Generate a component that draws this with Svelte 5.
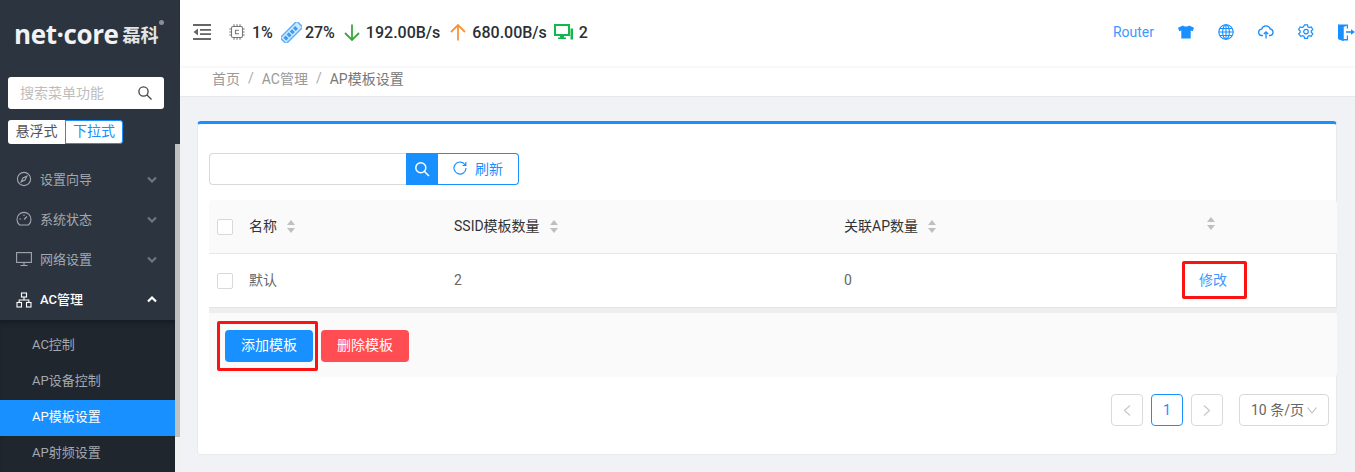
<script>
	const menu = [
		{ name: '设置向导', icon: 'compass' },
		{ name: '系统状态', icon: 'gauge' },
		{ name: '网络设置', icon: 'monitor' }
	];
	const subs = ['AC控制', 'AP设备控制', 'AP模板设置', 'AP射频设置'];
</script>

<div class="page">
	<aside class="sidebar">
		<div class="logo">
			<span class="logo-en">net·core</span><span class="logo-cn">磊科</span><span class="logo-r"></span>
		</div>
		<div class="search">
			<span>搜索菜单功能</span>
			<svg width="16" height="16" viewBox="0 0 16 16" fill="none" stroke="#444" stroke-width="1.3"><circle cx="6.5" cy="6.5" r="4.6" /><path d="M10 10l4.5 4.5" /></svg>
		</div>
		<div class="mode">
			<span class="mode-a">悬浮式</span><span class="mode-b">下拉式</span>
		</div>
		<div class="nav-wrap">
			<nav class="nav">
				{#each menu as item}
					<div class="item">
						<svg class="item-icon" width="16" height="16" viewBox="0 0 16 16" fill="none" stroke="#a3a8ae" stroke-width="1.1">
							{#if item.icon === 'compass'}
								<circle cx="8" cy="8" r="6.6" /><path d="M10.8 5.2L9 9 5.2 10.8 7 7z" />
							{:else if item.icon === 'gauge'}
								<path d="M3.6 14h8.8c1.6-1.2 2.6-3.3 2.6-5.6A7 7 0 0 0 1 8.400c0 2.300 1 4.400 2.600 5.600z" /><path d="M8 8.500L11 5.500M3.500 8h1.500M8 3.500V5" />
							{:else}
								<rect x="0.600" y="1.600" width="14.800" height="9.800" /><path d="M8 11.500v3M4.500 14.500h7" />
							{/if}
						</svg>
						<span>{item.name}</span>
						<svg class="chev" width="10" height="7" viewBox="0 0 10 7" fill="none" stroke="#6f757c" stroke-width="2.200"><path d="M1 1.500l4 4 4-4" /></svg>
					</div>
				{/each}
				<div class="item open">
					<svg class="item-icon" width="16" height="16" viewBox="0 0 16 16" fill="none" stroke="#fff" stroke-width="1.100"><rect x="5.500" y="1" width="5" height="4" /><rect x="1" y="10.500" width="4.500" height="4.500" /><rect x="10.500" y="10.500" width="4.500" height="4.500" /><path d="M8 5v3M3.200 10.500V8h9.600v2.500" /></svg>
					<span>AC管理</span>
					<svg class="chev" width="10" height="7" viewBox="0 0 10 7" fill="none" stroke="#fff" stroke-width="2.200"><path d="M1 5.500l4-4 4 4" /></svg>
				</div>
				<div class="subs">
					{#each subs as sub, i}
						<div class="sub" class:active={i === 2}>{sub}</div>
					{/each}
				</div>
			</nav>
			<div class="scrollbar"><div class="thumb"></div></div>
		</div>
	</aside>

	<main class="main">
		<header class="topbar">
			<svg class="fold" width="18" height="16" viewBox="0 0 18 16" fill="#666"><rect y="0" width="18" height="2" /><rect x="7" y="5" width="11" height="1.800" /><rect x="7" y="9.200" width="11" height="1.800" /><rect y="14" width="18" height="2" /><path d="M5 4.500v7L0.500 8z" /></svg>
			<svg class="ico-cpu" width="16" height="16" viewBox="0 0 16 16" fill="none" stroke="#777" stroke-width="1.100"><rect x="2.500" y="2.500" width="11" height="11" rx="1.500" /><path d="M5 0.300v2M8 0.300v2M11 0.300v2M5 13.500v2.200M8 13.500v2.200M11 13.500v2.200M0.300 5h2M0.300 8h2M0.300 11h2M13.500 5h2.200M13.500 8h2.200M13.500 11h2.200M10 6.200H6.500v3.600H10" /></svg>
			<b class="stat s-cpu">1%</b>
			<svg class="ico-ram" width="21" height="21" viewBox="0 0 21 21"><g transform="rotate(-45 10.500 10.500)"><rect x="-2" y="5.500" width="25" height="10" fill="#5fb0f7" /><rect x="-0.500" y="7" width="22" height="7" fill="#cfe7fd" /><rect x="1" y="8.500" width="3.200" height="4" fill="#3d9cf2" /><rect x="5.500" y="8.500" width="3.200" height="4" fill="#3d9cf2" /><rect x="10" y="8.500" width="3.200" height="4" fill="#3d9cf2" /><rect x="14.500" y="8.500" width="3.200" height="4" fill="#3d9cf2" /></g></svg>
			<b class="stat s-ram">27%</b>
			<svg class="ico-down" width="16" height="17" viewBox="0 0 16 17" fill="none" stroke="#3aa63f" stroke-width="1.800"><path d="M8 0.500V16M1 9l7 7 7-7" /></svg>
			<b class="stat s-down">192.00B/s</b>
			<svg class="ico-up" width="16" height="17" viewBox="0 0 16 17" fill="none" stroke="#f7953b" stroke-width="1.800"><path d="M8 16.500V1M1 8l7-7 7 7" /></svg>
			<b class="stat s-up">680.00B/s</b>
			<svg class="ico-pc" width="19" height="16" viewBox="0 0 19 16"><rect x="1" y="1" width="14" height="10" fill="none" stroke="#12b84c" stroke-width="2" /><rect x="16.500" y="4.500" width="2.500" height="11" fill="#12b84c" /><path d="M6 12h4v1.500h2V15H4v-1.500h2z" fill="#12b84c" /></svg>
			<b class="stat s-pc">2</b>

			<div class="tools">
				<span class="router">Router</span>
				<svg width="16" height="14" viewBox="0 0 16 14" fill="#1890ff"><path d="M5 0.500C6 1.800 10 1.800 11 0.500l5 2.300-1.300 3.400-2-.6V13.500H3.300V5.600l-2 .6L0 2.800z" /></svg>
				<svg width="16" height="16" viewBox="0 0 16 16" fill="none" stroke="#1890ff" stroke-width="1.100"><circle cx="8" cy="8" r="7.200" /><ellipse cx="8" cy="8" rx="3.400" ry="7.200" /><path d="M8 0.800v14.400M0.800 8h14.400M1.800 4.500h12.400M1.800 11.500h12.400" /></svg>
				<svg width="16" height="14" viewBox="0 0 16 14" fill="none" stroke="#1890ff" stroke-width="1.300"><path d="M5 10.500H4a3.200 3.200 0 0 1-.3-6.400A4.500 4.500 0 0 1 12.300 4a3.300 3.300 0 0 1 0 6.500H11" /><path d="M8 13.500V7M5.800 9L8 6.800 10.200 9" /></svg>
				<svg width="16" height="16" viewBox="0 0 16 16" fill="none" stroke="#1890ff" stroke-width="1.200"><path d="M6.500 0.800h3l.4 2 1.400.8 2-.7 1.500 2.600-1.500 1.300v1.600l1.500 1.300-1.500 2.600-2-.7-1.400.8-.4 2h-3l-.4-2-1.400-.8-2 .7L.6 9.700l1.500-1.300V6.800L.6 5.500l1.500-2.600 2 .7 1.400-.8z" /><circle cx="8" cy="7.600" r="2.300" /></svg>
				<svg width="17" height="17" viewBox="0 0 17 17"><path d="M0 0.500h10v4H8.800V1.800L5.500 3v12h3.300v-3.500H10V16.500H5.500v.5L0 15z" fill="#1890ff" /><path d="M0 0.500L5.500 3v14L0 15z" fill="#1890ff" /><path d="M8 8h6" stroke="#1890ff" stroke-width="1.600" /><path d="M13 5.200L17 8l-4 2.800z" fill="#1890ff" /></svg>
			</div>
		</header>

		<div class="crumbs">
			<span>首页</span><i>/</i><span>AC管理</span><i>/</i><span class="now">AP模板设置</span>
		</div>

		<section class="content">
			<div class="card">
				<div class="toolbar">
					<div class="input"></div>
					<div class="search-btn">
						<svg width="16" height="16" viewBox="0 0 16 16" fill="none" stroke="#fff" stroke-width="1.500"><circle cx="6.800" cy="6.800" r="5" /><path d="M10.500 10.500L15 15" /></svg>
					</div>
					<div class="refresh">
						<svg width="14" height="14" viewBox="0 0 14 14" fill="none" stroke="#1890ff" stroke-width="1.200"><path d="M12.300 4.200A6 6 0 1 0 13 7" /><path d="M9.500 4.500h3.300V1" /></svg>
						<span>刷新</span>
					</div>
				</div>

				<div class="table">
					<div class="row head">
						<div class="c-check"><span class="box"></span></div>
						<div class="c-name">名称<span class="sort"></span></div>
						<div class="c-ssid">SSID模板数量<span class="sort"></span></div>
						<div class="c-ap">关联AP数量<span class="sort"></span></div>
						<div class="c-act"><span class="sort only"></span></div>
					</div>
					<div class="row body">
						<div class="c-check"><span class="box"></span></div>
						<div class="c-name">默认</div>
						<div class="c-ssid">2</div>
						<div class="c-ap">0</div>
						<div class="c-act"><span class="marked edit">修改</span></div>
					</div>
				</div>

				<div class="strip"></div>
				<div class="actions">
					<span class="marked add"><button class="btn primary">添加模板</button></span>
					<button class="btn danger">删除模板</button>
				</div>

				<div class="pager">
					<span class="pg"><svg width="8" height="11" viewBox="0 0 8 11" fill="none" stroke="#c8c8c8" stroke-width="1.200"><path d="M7 0.500L1.500 5.500 7 10.500" /></svg></span>
					<span class="pg cur">1</span>
					<span class="pg"><svg width="8" height="11" viewBox="0 0 8 11" fill="none" stroke="#c8c8c8" stroke-width="1.200"><path d="M1 0.500l5.500 5-5.500 5" /></svg></span>
					<span class="size"><span class="size-text">10 条/页</span><svg width="10" height="7" viewBox="0 0 10 7" fill="none" stroke="#bbb" stroke-width="1.100"><path d="M0.500 0.500L5 6l4.500-5.500" /></svg></span>
				</div>
			</div>
		</section>
	</main>
</div>

<style>
	:global(body) {
		margin: 0;
		overflow: hidden;
	}

	.page {
		display: flex;
		width: 1355px;
		height: 472px;
		overflow: hidden;
		font-family: Roboto, 'Noto Sans CJK SC', sans-serif;
		font-size: 14px;
		background: #f0f2f5;
	}

	/* sidebar */
	.sidebar {
		width: 180px;
		flex: none;
		display: flex;
		flex-direction: column;
		background: #2c343f;
	}

	.logo {
		height: 77px;
		padding: 0 0 10px 14px;
		display: flex;
		align-items: center;
		color: #fff;
		box-sizing: border-box;
	}

	.logo-en {
		font-family: 'Open Sans', sans-serif;
		font-size: 26px;
		font-weight: 700;
		letter-spacing: -0.4px;
		color: #f2f2f2;
	}

	.logo-cn {
		font-size: 18px;
		font-weight: 700;
		margin-left: 4px;
		color: #e4e4e4;
	}

	.logo-r {
		width: 5px;
		height: 5px;
		border-radius: 50%;
		background: #8b8f95;
		margin-bottom: 22px;
	}

	.search {
		width: 156px;
		height: 32px;
		margin-left: 8px;
		padding: 0 11px 0 12px;
		box-sizing: border-box;
		display: flex;
		align-items: center;
		justify-content: space-between;
		background: #fff;
		border-radius: 3px;
		color: #bdbdbd;
		font-size: 14px;
	}

	.search span {
		padding-bottom: 2px;
	}

	.mode {
		display: flex;
		margin: 11px 0 0 8px;
		width: 115px;
		height: 24px;
		font-size: 14px;
		line-height: 20px;
		text-align: center;
	}

	.mode-a {
		width: 57px;
		background: #fff;
		color: #555;
		border-radius: 3px 0 0 3px;
		padding-top: 1px;
	}

	.mode-b {
		width: 56px;
		background: #fff;
		color: #1890ff;
		border: 1px solid #1890ff;
		border-radius: 0 3px 3px 0;
	}

	.nav-wrap {
		flex: 1;
		display: flex;
		min-height: 0;
	}

	.nav {
		width: 175px;
		padding-top: 15px;
		font-size: 13px;
		color: #a3a8ae;
	}

	.scrollbar {
		width: 5px;
		background: #f1f1f1;
	}

	.thumb {
		height: 293px;
		background: #c1c1c1;
	}

	.item {
		height: 40px;
		display: flex;
		align-items: center;
		padding: 0 18px 0 16px;
		gap: 8px;
	}

	.item span {
		flex: 1;
		padding-bottom: 2px;
	}

	.item.open {
		height: 41px;
		color: #fff;
		font-weight: 500;
	}

	.subs {
		padding-top: 8px;
		background: #1f262e;
		box-shadow: inset 0 6px 6px -4px rgba(0, 0, 0, 0.35);
	}

	.sub {
		height: 36px;
		line-height: 34px;
		padding-left: 32px;
		font-size: 13px;
	}

	.sub.active {
		background: #1890ff;
		color: #fff;
	}

	/* top bar */
	.main {
		flex: 1;
		display: flex;
		flex-direction: column;
		min-width: 0;
	}

	.topbar {
		height: 66px;
		flex: none;
		box-sizing: border-box;
		display: flex;
		align-items: center;
		padding: 0 0 2px 13px;
		background: #fff;
		box-shadow: 0 1px 3px rgba(0, 0, 0, 0.06);
		position: relative;
		overflow: hidden;
	}

	.stat {
		font-family: Roboto, sans-serif;
		font-size: 16px;
		font-weight: 500;
		color: #2a2f36;
	}

	.ico-cpu {
		margin-left: 18px;
	}

	.s-cpu {
		margin-left: 7px;
	}

	.ico-ram {
		margin-left: 8px;
	}

	.s-ram {
		margin-left: 3px;
	}

	.ico-down {
		margin-left: 9px;
	}

	.s-down {
		margin-left: 6px;
	}

	.ico-up {
		margin-left: 10px;
	}

	.s-up {
		margin-left: 6px;
	}

	.ico-pc {
		margin-left: 7px;
	}

	.s-pc {
		margin-left: 6px;
	}

	.tools {
		margin-left: auto;
		display: flex;
		align-items: center;
		gap: 24px;
	}

	.router {
		font-size: 14px;
		color: #3f97ff;
	}

	.crumbs {
		height: 31px;
		flex: none;
		box-sizing: border-box;
		padding: 0 0 6px 32px;
		display: flex;
		align-items: center;
		background: #fff;
		border-bottom: 1px solid #e6e8eb;
		color: #999;
		font-size: 14px;
	}

	.crumbs i {
		font-style: normal;
		margin: 0 8px;
		color: #aaa;
	}

	.crumbs .now {
		color: #777;
	}

	/* card */
	.content {
		flex: 1;
		padding: 24px 18px 17px 17px;
		min-height: 0;
	}

	.card {
		height: 334px;
		box-sizing: border-box;
		border: 1px solid #e9eaec;
		border-top: 3px solid #1890ff;
		border-radius: 4px;
		background: #fff;
		padding: 29px 0 0 11px;
	}

	.toolbar {
		display: flex;
		height: 32px;
	}

	.input {
		width: 197px;
		box-sizing: border-box;
		border: 1px solid #d9d9d9;
		border-right: 0;
		border-radius: 4px 0 0 4px;
	}

	.search-btn {
		width: 32px;
		display: flex;
		align-items: center;
		justify-content: center;
		background: #1890ff;
	}

	.refresh {
		width: 81px;
		box-sizing: border-box;
		border: 1px solid #1890ff;
		border-left: 0;
		border-radius: 0 4px 4px 0;
		padding-bottom: 3px;
		display: flex;
		align-items: center;
		justify-content: center;
		gap: 8px;
		color: #1890ff;
		font-size: 14px;
	}

	.table {
		margin-top: 15px;
		width: 1128px;
	}

	.row {
		display: flex;
		align-items: center;
		font-size: 14px;
		box-sizing: border-box;
	}

	.head {
		height: 54px;
		padding-bottom: 4px;
		background: #fafafa;
		border-bottom: 1px solid #e8e8e8;
		color: #333;
		border-radius: 4px 4px 0 0;
	}

	.body {
		height: 53px;
		padding-bottom: 2px;
		color: #666;
	}

	.c-check {
		width: 40px;
		padding: 3px 0 0 8px;
		box-sizing: border-box;
		display: flex;
	}

	.head .c-check {
		padding-top: 5px;
	}

	.box {
		width: 16px;
		height: 16px;
		box-sizing: border-box;
		border: 1px solid #d9d9d9;
		border-radius: 2px;
		background: #fff;
	}

	.c-name {
		width: 205px;
		display: flex;
		align-items: center;
	}

	.body .c-name {
		padding-bottom: 2px;
	}

	.c-ssid {
		width: 390px;
		display: flex;
		align-items: center;
	}

	.c-ap {
		width: 326px;
		display: flex;
		align-items: center;
	}

	.c-act {
		width: 86px;
		display: flex;
		justify-content: center;
		position: relative;
	}

	.sort {
		width: 8px;
		height: 13px;
		margin: 4px 0 0 10px;
		position: relative;
		display: inline-block;
	}

	.sort::before,
	.sort::after {
		content: '';
		position: absolute;
		left: 0;
		border-left: 4px solid transparent;
		border-right: 4px solid transparent;
	}

	.sort::before {
		top: 0;
		border-bottom: 5px solid #bfbfbf;
	}

	.sort::after {
		bottom: 0;
		border-top: 5px solid #bfbfbf;
	}

	.sort.only {
		margin: -2px 0 0 0;
		left: -2px;
	}

	/* red note frames sit over the page */
	.marked {
		position: relative;
		display: inline-block;
	}

	.marked::after {
		content: '';
		position: absolute;
		border: 3px solid #fb1313;
		border-radius: 2px;
		pointer-events: none;
	}

	.edit {
		color: #3f97ff;
		padding-bottom: 2px;
	}

	.edit::after {
		left: -17px;
		right: -20px;
		top: -8px;
		bottom: -8px;
	}

	.add::after {
		left: -8px;
		right: -5px;
		top: -9px;
		bottom: -9px;
	}

	.add {
		display: flex;
	}

	.strip {
		width: 1128px;
		height: 6px;
		background: #eeeeee;
		border-top: 1px solid #e4e4e4;
		box-sizing: border-box;
	}

	.actions {
		width: 1128px;
		height: 64px;
		box-sizing: border-box;
		display: flex;
		align-items: center;
		gap: 8px;
		padding: 2px 0 0 16px;
		background: #fafafa;
		border-radius: 0 0 4px 4px;
	}

	.btn {
		width: 88px;
		height: 32px;
		border: 0;
		border-radius: 4px;
		color: #fff;
		font-family: inherit;
		font-size: 14px;
		padding: 0 0 4px;
	}

	.primary {
		background: #1890ff;
	}

	.danger {
		background: #ff4d53;
	}

	.pager {
		display: flex;
		width: 1120px;
		justify-content: flex-end;
		margin-top: 17px;
		gap: 8px;
	}

	.pg {
		width: 32px;
		height: 32px;
		box-sizing: border-box;
		border: 1px solid #d9d9d9;
		border-radius: 4px;
		display: flex;
		align-items: center;
		justify-content: center;
		font-size: 14px;
	}

	.pg.cur {
		border-color: #1890ff;
		color: #1890ff;
	}

	.size {
		width: 90px;
		height: 32px;
		box-sizing: border-box;
		border: 1px solid #d9d9d9;
		border-radius: 4px;
		margin-left: 8px;
		display: flex;
		align-items: center;
		justify-content: center;
		gap: 3px;
		color: #666;
		font-size: 14px;
	}

	.size-text {
		padding-bottom: 2px;
	}
</style>
